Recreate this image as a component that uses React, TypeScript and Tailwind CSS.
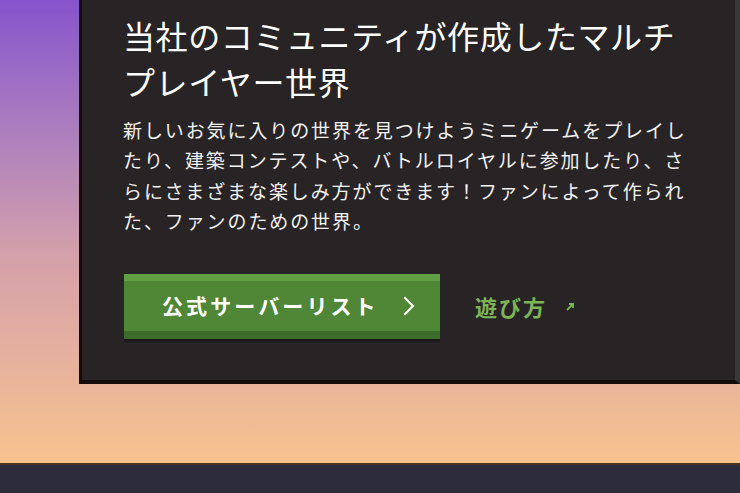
const jp = { fontFamily: '"Noto Sans CJK JP", "Noto Sans", sans-serif' };

function Chevron() {
    return (
        <svg width="14" height="20" viewBox="0 0 14 20" fill="none">
            <path d="M3 2 L11 10 L3 18" stroke="white" strokeWidth="2" strokeLinecap="square" />
        </svg>
    );
}

function ExternalArrow() {
    return (
        <svg width="10" height="10" viewBox="0 0 10 10" fill="none">
            <path d="M4 2 H8 V6" stroke="#7db556" strokeWidth="1.8" />
            <path d="M8 2 L2 8" stroke="#7db556" strokeWidth="1.8" />
        </svg>
    );
}

export default function App() {
    return (
        <div className="w-[740px] h-[493px] overflow-hidden flex flex-col" style={jp}>
            <div className="h-[463px] bg-gradient-to-b from-[#8753cc] via-[#d4a0aa] via-55% to-[#f8c28e] pl-[79px]">
                <div className="h-[384px] bg-[#282425] border-l-[3px] border-b-[4px] border-r-[5px] border-l-[#140c0c] border-b-[#140c0c] border-r-[#3a3738] pl-[41px] pt-[12px]">
                    <h1 className="text-[32px] leading-[46px] text-white tracking-[0.6px] font-normal">
                        <span className="block whitespace-nowrap">当社のコミュニティが作成したマルチ</span>
                        <span className="block whitespace-nowrap">プレイヤー世界</span>
                    </h1>
                    <p className="mt-[11px] text-[19px] leading-[30.3px] tracking-[1.9px] text-[#f2f0f0]">
                        <span className="block whitespace-nowrap">新しいお気に入りの世界を見つけようミニゲームをプレイし</span>
                        <span className="block whitespace-nowrap">たり、建築コンテストや、バトルロイヤルに参加したり、さ</span>
                        <span className="block whitespace-nowrap">らにさまざまな楽しみ方ができます！ファンによって作られ</span>
                        <span className="block whitespace-nowrap">た、ファンのための世界。</span>
                    </p>
                    <div className="mt-[38px] flex items-center">
                        <button className="w-[316px] h-[65px] ml-px flex flex-col shadow-[0_3px_0_#1c1819]">
                            <div className="h-[7px] bg-[#62a046]" />
                            <div className="flex-1 bg-[#4f8736] flex items-center pl-[38px] pr-[24px] justify-between">
                                <span className="text-[21px] font-bold text-white tracking-[3.1px]">公式サーバーリスト</span>
                                <Chevron />
                            </div>
                            <div className="h-[8px] bg-[#3c6b2b]" />
                        </button>
                        <a className="ml-[35px] flex items-center gap-[18px] text-[22px] font-bold text-[#7db556] tracking-[2px]">
                            遊び方
                            <ExternalArrow />
                        </a>
                    </div>
                </div>
            </div>
            <div className="h-[2px] bg-[#4b3322]" />
            <div className="flex-1 bg-[#2d2c3a]" />
        </div>
    );
}
